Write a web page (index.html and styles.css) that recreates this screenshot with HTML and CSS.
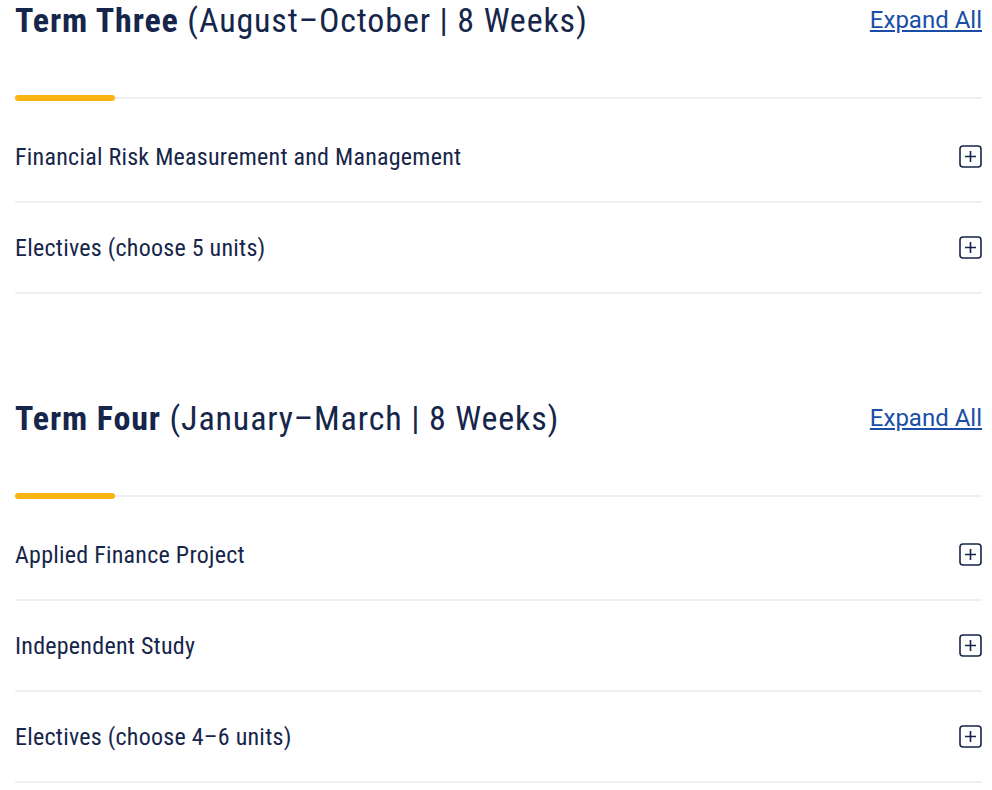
FILE: index.html
```html
<!DOCTYPE html>
<html lang="en">
<head>
    <meta charset="UTF-8">
    <meta name="viewport" content="width=device-width, initial-scale=1.0">
    <title>Curriculum Terms</title>
    <link rel="stylesheet" href="styles.css">
</head>
<body>
    <div class="container">
        <section class="term">
            <div class="term-head">
                <h2><strong>Term Three</strong> (August–October | 8 Weeks)</h2>
                <a href="#" class="expand-all">Expand All</a>
            </div>
            <div class="term-rule"></div>
            <ul class="course-list">
                <li class="course-row">
                    <span>Financial Risk Measurement and Management</span>
                    <button class="toggle" aria-label="Expand">
                        <svg width="23" height="23" viewBox="0 0 23 23"><rect x="1" y="1" width="21" height="21" rx="3" fill="none" stroke="#16264a" stroke-width="1.6"/><path d="M11.5 6v11M6 11.5h11" stroke="#16264a" stroke-width="1.6"/></svg>
                    </button>
                </li>
                <li class="course-row">
                    <span>Electives (choose 5 units)</span>
                    <button class="toggle" aria-label="Expand">
                        <svg width="23" height="23" viewBox="0 0 23 23"><rect x="1" y="1" width="21" height="21" rx="3" fill="none" stroke="#16264a" stroke-width="1.6"/><path d="M11.5 6v11M6 11.5h11" stroke="#16264a" stroke-width="1.6"/></svg>
                    </button>
                </li>
            </ul>
        </section>

        <section class="term">
            <div class="term-head">
                <h2><strong>Term Four</strong> (January–March | 8 Weeks)</h2>
                <a href="#" class="expand-all">Expand All</a>
            </div>
            <div class="term-rule"></div>
            <ul class="course-list">
                <li class="course-row">
                    <span>Applied Finance Project</span>
                    <button class="toggle" aria-label="Expand">
                        <svg width="23" height="23" viewBox="0 0 23 23"><rect x="1" y="1" width="21" height="21" rx="3" fill="none" stroke="#16264a" stroke-width="1.6"/><path d="M11.5 6v11M6 11.5h11" stroke="#16264a" stroke-width="1.6"/></svg>
                    </button>
                </li>
                <li class="course-row">
                    <span>Independent Study</span>
                    <button class="toggle" aria-label="Expand">
                        <svg width="23" height="23" viewBox="0 0 23 23"><rect x="1" y="1" width="21" height="21" rx="3" fill="none" stroke="#16264a" stroke-width="1.6"/><path d="M11.5 6v11M6 11.5h11" stroke="#16264a" stroke-width="1.6"/></svg>
                    </button>
                </li>
                <li class="course-row">
                    <span>Electives (choose 4–6 units)</span>
                    <button class="toggle" aria-label="Expand">
                        <svg width="23" height="23" viewBox="0 0 23 23"><rect x="1" y="1" width="21" height="21" rx="3" fill="none" stroke="#16264a" stroke-width="1.6"/><path d="M11.5 6v11M6 11.5h11" stroke="#16264a" stroke-width="1.6"/></svg>
                    </button>
                </li>
            </ul>
        </section>
    </div>
</body>
</html>
```

FILE: styles.css
```css
body {
    font-family: "Roboto Condensed", Roboto, "Liberation Sans", sans-serif;
    font-stretch: condensed;
    background-color: #fff;
    color: #16264a;
    margin: 0;
    padding: 0;
}

.container {
    padding: 0 10px 0 15px;
}

.term {
    margin-bottom: 104px;
}

.term-head {
    display: flex;
    justify-content: space-between;
    align-items: center;
}

.term-head h2 {
    margin: 0;
    font-size: 34px;
    line-height: 40px;
    font-weight: 400;
    letter-spacing: 0.85px;
}

.term-head h2 strong {
    font-weight: 700;
}

.expand-all {
    font-family: Roboto, "Liberation Sans", sans-serif;
    font-stretch: normal;
    color: #1a4ea6;
    font-size: 24px;
    text-decoration: underline;
}

.term-rule {
    position: relative;
    height: 2px;
    margin-top: 57px;
    background-color: #eceff3;
}

.term-rule::before {
    content: "";
    position: absolute;
    left: 0;
    top: -2px;
    width: 100px;
    height: 6px;
    border-radius: 3px;
    background-color: #fcb415;
}

.course-list {
    list-style: none;
    margin: 0;
    padding: 13px 0 0;
}

.course-row {
    display: flex;
    justify-content: space-between;
    align-items: center;
    height: 89px;
    border-bottom: 2px solid #eceff3;
    font-size: 24px;
    letter-spacing: 0.25px;
}

.toggle {
    display: flex;
    padding: 0;
    border: 0;
    background: none;
    cursor: pointer;
}
```
